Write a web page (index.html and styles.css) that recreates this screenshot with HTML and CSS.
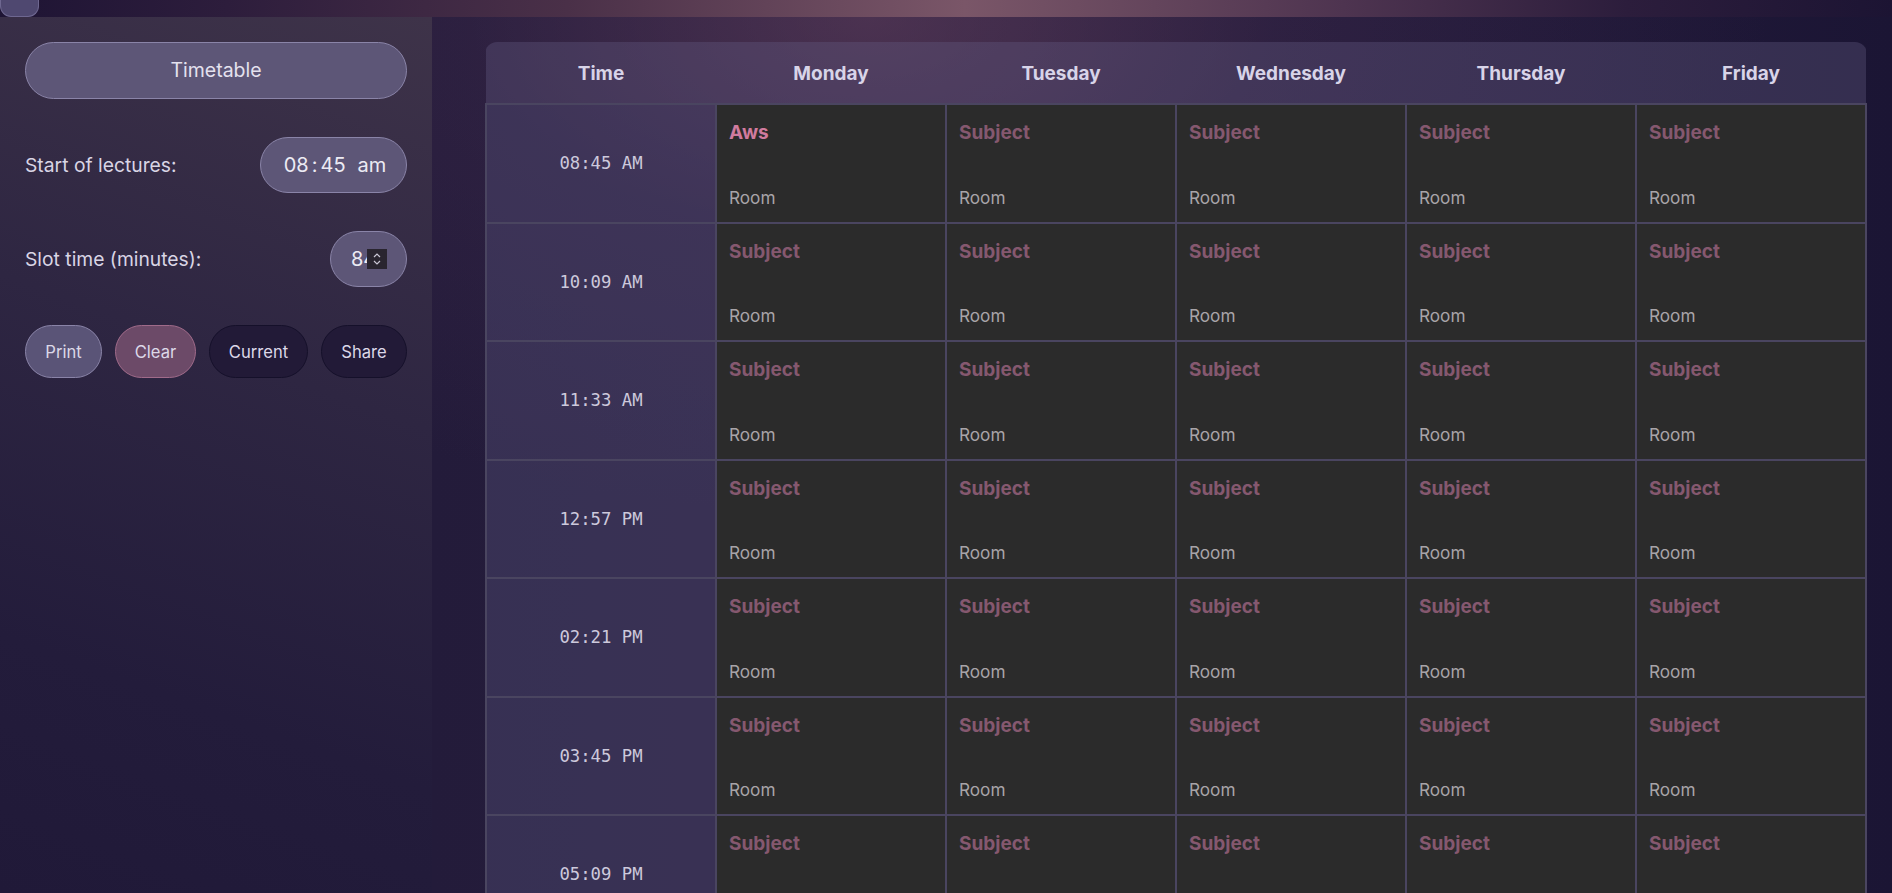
FILE: index.html
```html
<!DOCTYPE html>
<html lang="en">
<head>
<meta charset="utf-8">
<title>Timetable</title>
<link rel="stylesheet" href="styles.css">
</head>
<body>
<div class="topbar"><div class="tab"></div></div>
<div class="layout">
  <aside class="sidebar">
    <button class="pill title-btn">Timetable</button>
    <div class="field">
      <span class="label">Start of lectures:</span>
      <div class="pill time-input"><span>08</span><span class="colon">:</span><span>45</span><span class="ampm">am</span></div>
    </div>
    <div class="field">
      <span class="label">Slot time (minutes):</span>
      <div class="pill num-input"><span class="num">84</span><span class="spin"><svg width="10" height="14" viewBox="0 0 10 14"><path d="M2 5 L5 2 L8 5 M2 9 L5 12 L8 9" fill="none" stroke="#c9c6d4" stroke-width="1.2"/></svg></span></div>
    </div>
    <div class="actions">
      <button class="pill act act-print">Print</button>
      <button class="pill act act-clear">Clear</button>
      <button class="pill act act-dark act-current">Current</button>
      <button class="pill act act-dark act-share">Share</button>
    </div>
  </aside>
  <main class="main">
    <div class="card">
      <table class="tt">
        <thead>
          <tr><th>Time</th><th>Monday</th><th>Tuesday</th><th>Wednesday</th><th>Thursday</th><th>Friday</th></tr>
        </thead>
        <tbody>
          <tr><td class="time">08:45 AM</td><td><div class="slot"><span class="subj active">Aws</span><span class="room">Room</span></div></td><td><div class="slot"><span class="subj">Subject</span><span class="room">Room</span></div></td><td><div class="slot"><span class="subj">Subject</span><span class="room">Room</span></div></td><td><div class="slot"><span class="subj">Subject</span><span class="room">Room</span></div></td><td><div class="slot"><span class="subj">Subject</span><span class="room">Room</span></div></td></tr>
          <tr><td class="time">10:09 AM</td><td><div class="slot"><span class="subj">Subject</span><span class="room">Room</span></div></td><td><div class="slot"><span class="subj">Subject</span><span class="room">Room</span></div></td><td><div class="slot"><span class="subj">Subject</span><span class="room">Room</span></div></td><td><div class="slot"><span class="subj">Subject</span><span class="room">Room</span></div></td><td><div class="slot"><span class="subj">Subject</span><span class="room">Room</span></div></td></tr>
          <tr><td class="time">11:33 AM</td><td><div class="slot"><span class="subj">Subject</span><span class="room">Room</span></div></td><td><div class="slot"><span class="subj">Subject</span><span class="room">Room</span></div></td><td><div class="slot"><span class="subj">Subject</span><span class="room">Room</span></div></td><td><div class="slot"><span class="subj">Subject</span><span class="room">Room</span></div></td><td><div class="slot"><span class="subj">Subject</span><span class="room">Room</span></div></td></tr>
          <tr><td class="time">12:57 PM</td><td><div class="slot"><span class="subj">Subject</span><span class="room">Room</span></div></td><td><div class="slot"><span class="subj">Subject</span><span class="room">Room</span></div></td><td><div class="slot"><span class="subj">Subject</span><span class="room">Room</span></div></td><td><div class="slot"><span class="subj">Subject</span><span class="room">Room</span></div></td><td><div class="slot"><span class="subj">Subject</span><span class="room">Room</span></div></td></tr>
          <tr><td class="time">02:21 PM</td><td><div class="slot"><span class="subj">Subject</span><span class="room">Room</span></div></td><td><div class="slot"><span class="subj">Subject</span><span class="room">Room</span></div></td><td><div class="slot"><span class="subj">Subject</span><span class="room">Room</span></div></td><td><div class="slot"><span class="subj">Subject</span><span class="room">Room</span></div></td><td><div class="slot"><span class="subj">Subject</span><span class="room">Room</span></div></td></tr>
          <tr><td class="time">03:45 PM</td><td><div class="slot"><span class="subj">Subject</span><span class="room">Room</span></div></td><td><div class="slot"><span class="subj">Subject</span><span class="room">Room</span></div></td><td><div class="slot"><span class="subj">Subject</span><span class="room">Room</span></div></td><td><div class="slot"><span class="subj">Subject</span><span class="room">Room</span></div></td><td><div class="slot"><span class="subj">Subject</span><span class="room">Room</span></div></td></tr>
          <tr><td class="time">05:09 PM</td><td><div class="slot"><span class="subj">Subject</span><span class="room">Room</span></div></td><td><div class="slot"><span class="subj">Subject</span><span class="room">Room</span></div></td><td><div class="slot"><span class="subj">Subject</span><span class="room">Room</span></div></td><td><div class="slot"><span class="subj">Subject</span><span class="room">Room</span></div></td><td><div class="slot"><span class="subj">Subject</span><span class="room">Room</span></div></td></tr>
        </tbody>
      </table>
    </div>
  </main>
</div>
</body>
</html>
```
FILE: styles.css
```css
* { box-sizing: border-box; }
html, body { margin: 0; padding: 0; height: 100%; overflow: hidden; }
body {
  font-family: Inter, "Noto Sans", sans-serif;
  background: #1d1734;
  color: #d8d4e4;
}
.topbar {
  height: 17px;
  background: linear-gradient(90deg, #1e1434 0%, #2d1d3c 12%, #4a3048 30%, #7a5668 51%, #4e3450 71%, #2c1d3c 86%, #1c1433 100%);
  display: flex;
}
.tab {
  width: 39px;
  height: 17px;
  background: #4f4870;
  border: 1px solid #6e6790;
  border-top: none;
  border-radius: 0 0 11px 11px;
}
.layout {
  display: flex;
  height: calc(100% - 17px);
}
.sidebar {
  width: 432px;
  flex: none;
  padding: 25px 25px 0 25px;
  display: flex;
  flex-direction: column;
  gap: 38px;
  background: linear-gradient(200deg, #3e3349 0%, #2e2642 40%, #231c3b 75%, #201938 100%);
}
.pill {
  font-family: Inter, "Noto Sans", sans-serif;
  border-radius: 999px;
  color: #e4e1ee;
  margin: 0;
}
.title-btn {
  height: 57px;
  width: 100%;
  font-size: 19.5px;
  background: #5d5677;
  border: 1px solid #8a84a8;
  padding-bottom: 2px;
}
.field {
  display: flex;
  align-items: center;
  justify-content: space-between;
}
.label {
  font-size: 19.3px;
  color: #d9d5e5;
}
.time-input {
  width: 147px;
  height: 56px;
  background: #5d5677;
  border: 1px solid #8a84a8;
  display: flex;
  align-items: center;
  justify-content: center;
  padding-left: 3px;
  font-size: 20px;
  color: #ecebf4;
}
.time-input .colon { margin: 0 3px; }
.time-input .ampm { margin-left: 12px; }
.num-input {
  width: 77px;
  height: 56px;
  background: #5d5677;
  border: 1px solid #8a84a8;
  display: flex;
  align-items: center;
  padding-left: 20px;
  font-size: 20px;
  color: #ecebf4;
  overflow: hidden;
}
.num-input .num { width: 16px; overflow: hidden; white-space: nowrap; }
.spin {
  width: 20px;
  height: 20px;
  background: #29252f;
  display: flex;
  align-items: center;
  justify-content: center;
}
.actions {
  display: flex;
  justify-content: space-between;
}
.act {
  height: 53px;
  font-size: 16.6px;
  color: #dcd8e8;
}
.act-print { width: 77px; background: #5a5477; border: 1px solid #8a84a8; }
.act-clear { width: 81px; background: #6c4a68; border: 1px solid #a06b8a; }
.act-dark { background: #221a37; border: 1px solid #15102a; }
.act-current { width: 99px; }
.act-share { width: 86px; }

.main {
  flex: 1;
  padding: 25px 25px 0 53px;
  background:
    radial-gradient(ellipse 900px 500px at 30% 0%, rgba(110, 70, 100, 0.5) 0%, rgba(70, 45, 80, 0.28) 45%, rgba(30, 22, 52, 0) 100%),
    linear-gradient(90deg, #231b3a 0%, #2a1f3e 40%, #221a3a 70%, #1b1534 100%);
}
.card {
  width: 1382px;
  border-radius: 12px 12px 0 0;
  overflow: hidden;
}
.tt {
  width: 100%;
  border-collapse: collapse;
  table-layout: fixed;
}
.tt th {
  height: 62px;
  font-size: 19px;
  font-weight: 700;
  color: #d8d4e8;
  background: rgba(100, 92, 130, 0.36);
  padding: 2px 0 0 0;
}
.tt td {
  border: 2px solid #4a4560;
  padding: 0;
  vertical-align: top;
  background: #2b2b2b;
}
.tt td.time {
  background: rgba(84, 78, 118, 0.42);
  font-family: "DejaVu Sans Mono", "Liberation Mono", monospace;
  font-size: 17.3px;
  color: #cdc9dc;
  text-align: center;
  vertical-align: middle;
  height: 118.5px;
}
.slot {
  height: 116.5px;
  padding: 16px 12px 14px 12px;
  display: flex;
  flex-direction: column;
  justify-content: space-between;
}
.subj {
  font-size: 19px;
  font-weight: 700;
  color: #85586f;
}
.subj.active { color: #d07b9e; }
.room {
  font-size: 17.2px;
  color: #a8a4a8;
}
```
